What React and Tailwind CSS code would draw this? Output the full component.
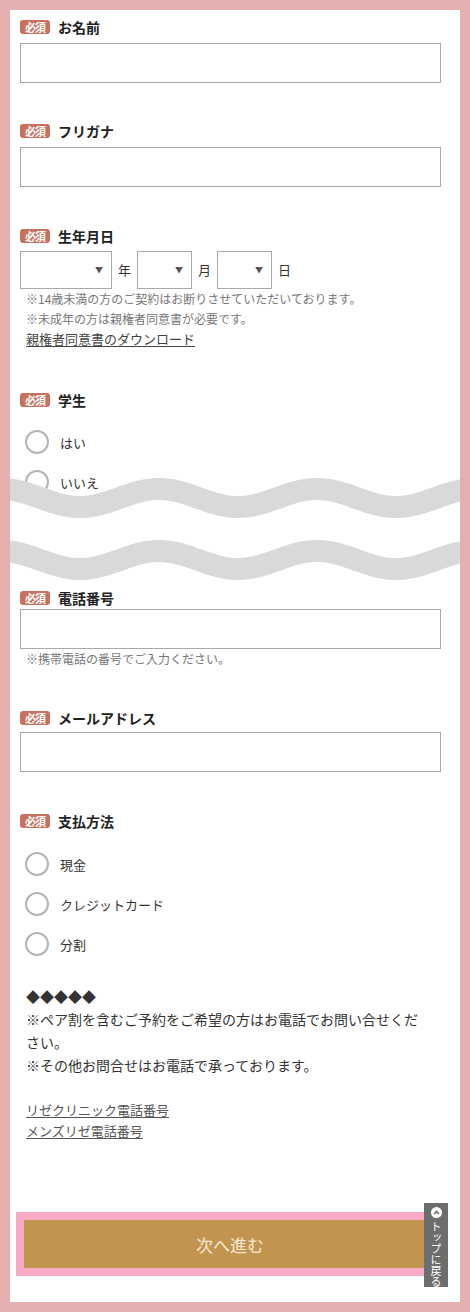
import React from "react";

const FONT = { fontFamily: '"Noto Sans CJK JP", "Noto Sans", sans-serif' };

function Badge() {
  return (
    <span className="inline-flex items-center justify-center w-[30px] h-[14px] rounded-[3px] bg-[#c8715f] text-white text-[11px] font-bold leading-none tracking-[-1px]">
      必須
    </span>
  );
}

function Label({ children, className = "" }) {
  return (
    <div className={"flex items-center gap-[8px] h-[20px] " + className}>
      <Badge />
      <span className="text-[14px] font-bold text-[#222] leading-[20px]">{children}</span>
    </div>
  );
}

function Input({ className = "" }) {
  return <div className={"h-[40px] w-full border border-[#a9a9a9] bg-white " + className} />;
}

function Select({ w }) {
  return (
    <div className={"relative h-[38px] border border-[#a9a9a9] bg-white flex items-center justify-end pr-[8px] " + w}>
      <span className="text-[8px] text-[#555] leading-none">▼</span>
    </div>
  );
}

function Radio({ children }) {
  return (
    <div className="flex items-center h-[40px] pl-[5px] gap-[11px]">
      <span className="w-[24px] h-[24px] rounded-full border-2 border-[#b4b4b4] bg-white shrink-0" />
      <span className="text-[13px] text-[#333] leading-none">{children}</span>
    </div>
  );
}

function Wave() {
  const P = 158;
  const amp = 9;
  const ph = 70; // svg x of trough
  const pts = (c) => {
    const a = [];
    for (let x = -30; x <= 480; x += 2) {
      const y = c + amp * Math.cos((2 * Math.PI * (x - ph)) / P);
      a.push([x, y]);
    }
    return a;
  };
  const up = pts(28);
  const lo = pts(90);
  const line = (a) => "M" + a.map((p) => p[0] + " " + p[1].toFixed(2)).join(" L");
  const fill =
    line(up) +
    " L" +
    lo
      .slice()
      .reverse()
      .map((p) => p[0] + " " + p[1].toFixed(2))
      .join(" L") +
    " Z";
  return (
    <svg width="450" height="125" viewBox="0 0 450 125" className="block">
      <path d={fill} fill="#ffffff" />
      <path d={line(up)} fill="none" stroke="#d9d9d9" strokeWidth="22" />
      <path d={line(lo)} fill="none" stroke="#d9d9d9" strokeWidth="22" />
    </svg>
  );
}

export default function App() {
  return (
    <div className="w-[470px] h-[1312px] bg-[#e4b0af] p-[10px]" style={FONT}>
      <div className="relative h-full bg-white pl-[10px] pr-[19px] pt-[7px]">
        <Label>お名前</Label>
        <Input className="mt-[6px]" />

        <Label className="mt-[38px]">フリガナ</Label>
        <Input className="mt-[6px]" />

        <Label className="mt-[39px]">生年月日</Label>
        <div className="mt-[5px] flex items-center gap-[6px] text-[13px] text-[#333]">
          <Select w="w-[92px]" />
          <span>年</span>
          <Select w="w-[55px]" />
          <span>月</span>
          <Select w="w-[55px]" />
          <span>日</span>
        </div>
        <div className="pl-[6px]">
          <p className="text-[12px] leading-[20px] text-[#777]">※14歳未満の方のご契約はお断りさせていただいております。</p>
          <p className="text-[12px] leading-[20px] text-[#777]">※未成年の方は親権者同意書が必要です。</p>
          <p className="text-[13px] leading-[20px] text-[#444] underline underline-offset-2">親権者同意書のダウンロード</p>
        </div>

        <Label className="mt-[41px]">学生</Label>
        <div className="mt-[12px]">
          <Radio>はい</Radio>
          <Radio>いいえ</Radio>
        </div>

        <Label className="mt-[86px]">電話番号</Label>
        <Input className="mt-[1px]" />
        <p className="pl-[6px] text-[12px] leading-[20px] text-[#777]">※携帯電話の番号でご入力ください。</p>

        <Label className="mt-[39px]">メールアドレス</Label>
        <Input className="mt-[4px]" />

        <Label className="mt-[39px]">支払方法</Label>
        <div className="mt-[13px]">
          <Radio>現金</Radio>
          <Radio>クレジットカード</Radio>
          <Radio>分割</Radio>
        </div>

        <div className="mt-[21px] ml-[6px] w-[400px] text-[14px] leading-[23px] text-[#333]">
          <p>◆◆◆◆◆</p>
          <p>※ペア割を含むご予約をご希望の方はお電話でお問い合せください。</p>
          <p>※その他お問合せはお電話で承っております。</p>
        </div>

        <div className="mt-[22px] pl-[6px] text-[13px] leading-[21px] text-[#555]">
          <p className="underline underline-offset-2">リゼクリニック電話番号</p>
          <p className="underline underline-offset-2">メンズリゼ電話番号</p>
        </div>

        <div className="mt-[71px] ml-[-4px] w-[428px] h-[64px] border-[8px] border-[#f8a9c5] bg-[#c1954f] flex items-center justify-center">
          <span className="text-[17px] text-[#f5e9d4] leading-none">次へ進む</span>
        </div>

        <div className="absolute left-0 top-[460px]">
          <Wave />
        </div>

        <div className="absolute left-[414px] top-[1193px] w-[24px] h-[84px] bg-[#6d6d6d] flex flex-col items-center pt-[4px]">
          <span className="w-[11px] h-[11px] rounded-full bg-white flex items-center justify-center">
            <svg width="7" height="5" viewBox="0 0 7 5">
              <path d="M1 4 L3.5 1.5 L6 4" fill="none" stroke="#6d6d6d" strokeWidth="1.6" />
            </svg>
          </span>
          <span
            className="mt-[3px] text-[11px] leading-[12px] text-white"
            style={{ writingMode: "vertical-rl" }}
          >
            トップに戻る
          </span>
        </div>
      </div>
    </div>
  );
}
